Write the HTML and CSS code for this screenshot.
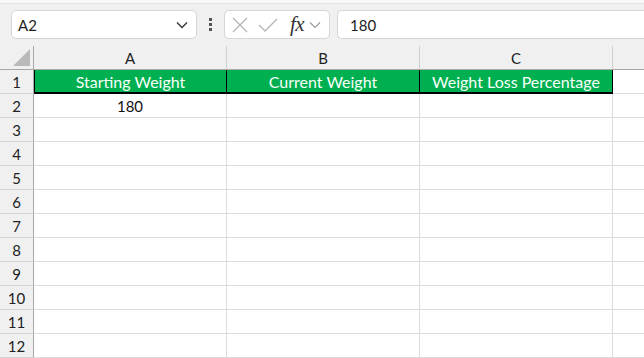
FILE: index.html
```html
<!DOCTYPE html>
<html lang="en">
<head>
    <meta charset="UTF-8">
    <title>Weight Loss Sheet</title>
    <link rel="stylesheet" href="styles.css">
</head>
<body>
    <div class="toolbar">
        <div class="name-box">
            <span>A2</span>
            <svg class="chevron" width="12" height="8" viewBox="0 0 12 8"><path d="M1 1.5 L6 6.5 L11 1.5" fill="none" stroke="#333" stroke-width="1.3"/></svg>
        </div>
        <div class="dots"><i></i><i></i><i></i></div>
        <div class="fx-box">
            <svg width="16" height="16" viewBox="0 0 16 16"><path d="M1 1 L15 15 M15 1 L1 15" stroke="#b5b5b5" stroke-width="1.3"/></svg>
            <svg width="20" height="16" viewBox="0 0 20 16"><path d="M1 8 L7 14 L19 2" fill="none" stroke="#b5b5b5" stroke-width="1.3"/></svg>
            <span class="fx">fx</span>
            <svg width="12" height="8" viewBox="0 0 12 8"><path d="M1 1.5 L6 6.5 L11 1.5" fill="none" stroke="#999" stroke-width="1.1"/></svg>
        </div>
        <div class="formula">180</div>
    </div>

    <div class="sheet">
        <div class="corner"><span class="tri"></span></div>
        <div class="col-head">A</div>
        <div class="col-head">B</div>
        <div class="col-head">C</div>
        <div class="col-head rest"></div>

        <div class="row-head">1</div>
        <div class="cell title">Starting Weight</div>
        <div class="cell title">Current Weight</div>
        <div class="cell title">Weight Loss Percentage</div>
        <div class="cell after-title"></div>

        <div class="row-head">2</div>
        <div class="cell">180</div>
        <div class="cell"></div>
        <div class="cell"></div>
        <div class="cell rest"></div>

        <div class="row-head">3</div><div class="cell"></div><div class="cell"></div><div class="cell"></div><div class="cell rest"></div>
        <div class="row-head">4</div><div class="cell"></div><div class="cell"></div><div class="cell"></div><div class="cell rest"></div>
        <div class="row-head">5</div><div class="cell"></div><div class="cell"></div><div class="cell"></div><div class="cell rest"></div>
        <div class="row-head">6</div><div class="cell"></div><div class="cell"></div><div class="cell"></div><div class="cell rest"></div>
        <div class="row-head">7</div><div class="cell"></div><div class="cell"></div><div class="cell"></div><div class="cell rest"></div>
        <div class="row-head">8</div><div class="cell"></div><div class="cell"></div><div class="cell"></div><div class="cell rest"></div>
        <div class="row-head">9</div><div class="cell"></div><div class="cell"></div><div class="cell"></div><div class="cell rest"></div>
        <div class="row-head">10</div><div class="cell"></div><div class="cell"></div><div class="cell"></div><div class="cell rest"></div>
        <div class="row-head">11</div><div class="cell"></div><div class="cell"></div><div class="cell"></div><div class="cell rest"></div>
        <div class="row-head">12</div><div class="cell"></div><div class="cell"></div><div class="cell"></div><div class="cell rest"></div>
    </div>
</body>
</html>
```

FILE: styles.css
```css
body {
    margin: 0;
    font-family: Lato, "Noto Sans", sans-serif;
    background: #fff;
    overflow: hidden;
}
.toolbar {
    height: 46px;
    box-sizing: border-box;
    background: #f0f0f0;
    border-top: 3px solid #f8f8f8;
    box-shadow: inset 0 1px 0 #e4e4e4;
    display: flex;
    align-items: center;
    padding: 0 0 0 11px;
}
.name-box {
    width: 186px;
    height: 29px;
    box-sizing: border-box;
    background: #fff;
    border: 1px solid #d6d6d6;
    border-radius: 5px;
    display: flex;
    align-items: center;
    justify-content: space-between;
    padding: 0 8px 0 6px;
    font-size: 15px;
    color: #222;
}
.dots {
    width: 27px;
    display: flex;
    flex-direction: column;
    align-items: center;
    gap: 2px;
}
.dots i {
    display: block;
    width: 3px;
    height: 3px;
    background: #555;
}
.fx-box {
    width: 106px;
    height: 29px;
    box-sizing: border-box;
    background: #fff;
    border: 1px solid #d6d6d6;
    border-radius: 5px;
    display: flex;
    align-items: center;
    padding: 0 4px 0 7px;
}
.fx-box svg:nth-child(2) {
    margin-left: 10px;
}
.fx {
    font-family: "Liberation Serif", "DejaVu Serif", serif;
    font-style: italic;
    font-size: 21px;
    color: #333;
    margin: 0 5px 0 12px;
    letter-spacing: -0.5px;
}
.formula {
    flex: 1;
    height: 29px;
    box-sizing: border-box;
    margin-left: 7px;
    background: #fff;
    border: 1px solid #d6d6d6;
    border-right: none;
    border-radius: 5px 0 0 5px;
    display: flex;
    align-items: center;
    padding-left: 12px;
    font-size: 15px;
    color: #222;
}
.sheet {
    display: grid;
    grid-template-columns: 34px 193px 193px 193px 1fr;
    grid-auto-rows: 24px;
    font-size: 15px;
}
.corner, .col-head {
    background: #f0f0f0;
    border-bottom: 1px solid #a8a8a8;
    box-sizing: border-box;
    display: flex;
    align-items: center;
    justify-content: center;
    color: #222;
}
.col-head {
    border-right: 1px solid #d0d0d0;
}
.col-head.rest {
    border-right: none;
}
.corner {
    border-right: 1px solid #a8a8a8;
    position: relative;
}
.tri {
    position: absolute;
    right: 3px;
    bottom: 3px;
    width: 0;
    height: 0;
    border-left: 17px solid transparent;
    border-bottom: 17px solid #b9b9b9;
}
.row-head {
    background: #f0f0f0;
    border-right: 1px solid #a8a8a8;
    border-bottom: 1px solid #d4d4d4;
    box-sizing: border-box;
    display: flex;
    align-items: center;
    justify-content: center;
    color: #222;
    padding-top: 1px;
}
.cell {
    border-right: 1px solid #dcdcdc;
    border-bottom: 1px solid #dcdcdc;
    box-sizing: border-box;
    display: flex;
    align-items: center;
    justify-content: center;
    color: #111;
    padding-top: 1px;
}
.cell.rest {
    border-right: none;
}
.cell.title {
    background: #00b050;
    color: #f7fff9;
    font-size: 16px;
    border-right: 1px solid #000;
    border-bottom: 2px solid #000;
}
.cell.title:nth-child(7) {
    border-left: 1px solid #000;
}
.cell.after-title {
    border-right: none;
}
```
